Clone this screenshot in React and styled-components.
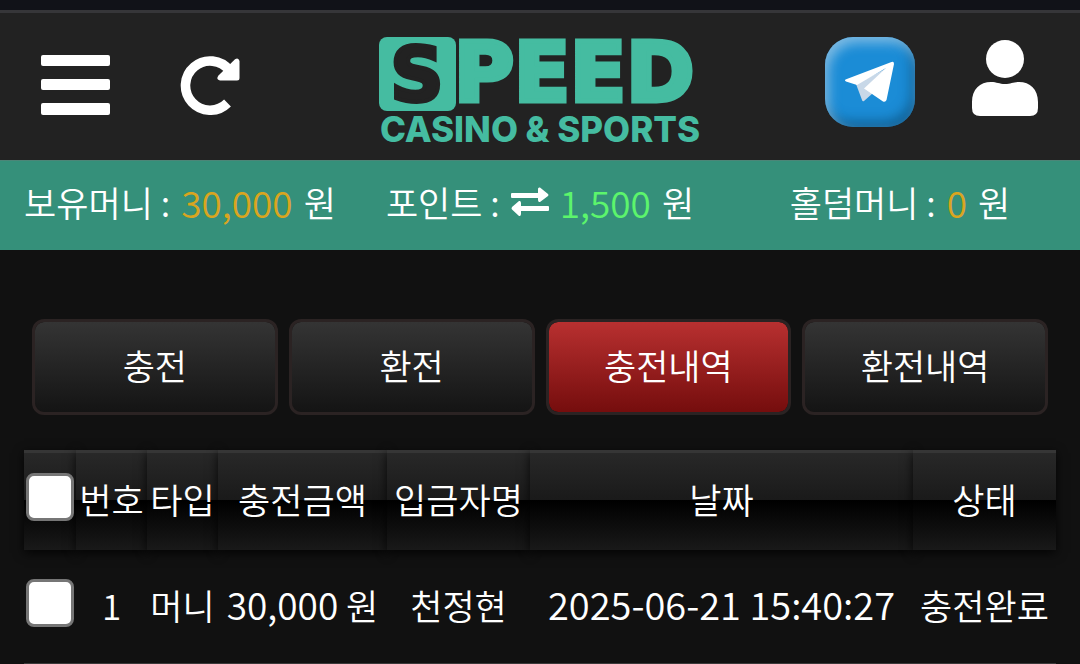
import { useState } from "react";
import styled, { createGlobalStyle } from "styled-components";

const GlobalStyle = createGlobalStyle`
  * {
    box-sizing: border-box;
  }

  body {
    margin: 0;
    background: #111;
    color: #fff;
    font-family: "Noto Sans CJK KR", sans-serif;
    font-size: 35px;
    font-weight: 350;
    line-height: 48px;
  }
`;

const Header = styled.header`
  display: grid;
  grid-template-columns: 1fr auto 1fr;
  align-items: center;
  height: 160px;
  padding: 0 41px 0 40px;
  background: linear-gradient(#111218 10px, #363639 10px, #363639 13px, #222 13px);
`;

const HeaderGroup = styled.div`
  display: flex;
  align-items: ${({ $end }) => ($end ? "flex-start" : "center")};
  justify-content: ${({ $end }) => ($end ? "flex-end" : "flex-start")};
  gap: ${({ $end }) => ($end ? "56px" : "70px")};
  padding-top: ${({ $end }) => ($end ? "4px" : "10px")};
`;

const IconButton = styled.button`
  display: flex;
  padding: 0;
  border: 0;
  background: none;
  color: #fff;
  cursor: pointer;
`;

const LogoLink = styled.a`
  display: flex;
  padding-top: 20px;
`;

const TelegramLink = styled.a`
  display: flex;
  align-items: center;
  justify-content: center;
  width: 90px;
  height: 90px;
  border-radius: 28px;
  background: #1b8cd6;
  box-shadow: inset 4px 6px 12px rgba(190, 220, 240, 0.6),
    inset -4px -6px 12px rgba(10, 70, 110, 0.6);
`;

const MoneyBar = styled.section`
  display: grid;
  grid-template-columns: repeat(3, 1fr);
  align-items: center;
  height: 90px;
  padding-bottom: 8px;
  border-top: 1px solid #4c8577;
  background: #35907a;
`;

const MoneyItem = styled.div`
  display: flex;
  align-items: center;
  justify-content: center;
  gap: 11px;
  white-space: nowrap;
`;

const Amount = styled.span`
  color: ${({ $color }) => $color};
  font-size: 37px;
`;

const Main = styled.main`
  padding: 69px 24px 0;
`;

const Tabs = styled.nav`
  display: grid;
  grid-template-columns: repeat(4, 1fr);
  gap: 11px;
  padding: 0 8px;
`;

const TabButton = styled.button`
  height: 96px;
  padding: 0 0 4px;
  border: 3px solid #2b2323;
  border-radius: 12px;
  background: ${({ $active }) =>
    $active
      ? "linear-gradient(#b83030, #750d0d) padding-box"
      : "linear-gradient(#343434, #141414) padding-box"};
  color: #fff;
  font: inherit;
  cursor: pointer;
`;

const HistoryTable = styled.table`
  width: 100%;
  margin-top: 35px;
  border-spacing: 0;
  table-layout: fixed;
  text-align: center;
  white-space: nowrap;
`;

const HeadCell = styled.th`
  width: ${({ $width }) => $width};
  height: 100px;
  padding: 0 0 6px;
  border-top: 3px solid #363636;
  background: linear-gradient(#282828, #1a1a1a 48%, #000 49%, #191919);
  box-shadow: 0 3px 10px rgba(0, 0, 0, 0.8);
  font-weight: inherit;
`;

const Cell = styled.td`
  height: 114px;
  padding: 0 0 4px;
  border-bottom: 1px solid #3a3a3a;
`;

const DateText = styled.time`
  font-size: 38px;
`;

const CheckBox = styled.input`
  appearance: none;
  position: relative;
  display: block;
  width: 48px;
  height: 48px;
  margin: 0 auto 4px 2px;
  border: 3px solid #767676;
  border-radius: 8px;
  background: #fff;

  &:checked {
    background: #b83030;
  }
`;

const MenuIcon = () => (
  <svg width="70" height="62" viewBox="0 0 70 62" fill="currentColor">
    <rect x="1" y="1" width="69" height="11" rx="2" />
    <rect x="1" y="25" width="69" height="11" rx="2" />
    <rect x="1" y="49" width="69" height="12" rx="2" />
  </svg>
);

const RefreshIcon = () => (
  <svg width="60" height="60" viewBox="-1 -1 60 60">
    <path
      d="M46.5 47A24.600 24.600 0 1 1 48.500 14.500"
      fill="none"
      stroke="currentColor"
      strokeWidth="9.6"
    />
    <path
      d="M54 3.200Q57.500 1 58.500 5V22Q58.500 24.500 56 24.500H39Q34.500 23.500 37.500 19.500Z"
      fill="currentColor"
    />
  </svg>
);

const UserIcon = () => (
  <svg width="68" height="80" viewBox="0 -2 68 80" fill="currentColor">
    <circle cx="34" cy="20" r="19" />
    <path d="M1 63C1 50 9 43 20 43C26 43 28 45 34 45C40 45 42 43 48 43C59 43 67 50 67 63V69Q67 77 59 77H9Q1 77 1 69Z" />
  </svg>
);

const PlaneIcon = () => (
  <svg width="52" height="44" viewBox="0 0 52 44">
    <path d="M12 24L18 40Q18.500 42 20 41L29 33L43 8Z" fill="#c8d8e8" />
    <path
      d="M1.500 19.500Q0 20.500 2 21.500L13 25L42 8L20 28.500L39 41.500Q41.500 42.500 42.500 40L50 4Q50 1 47.500 2Z"
      fill="#fff"
    />
  </svg>
);

const ExchangeIcon = () => (
  <svg width="38" height="30" viewBox="0 0 38 30" fill="currentColor">
    <path d="M1 6H27V2Q27 0 29 .5L37 7Q38 8 37 9L29 15Q27 15.500 27 13V11H1Q0 11 0 10V7Q0 6 1 6Z" />
    <path d="M37 19H10V16Q10 13.500 8 14L1 20Q0 21.500 1 22.500L8 29Q10 29.500 10 27V24H37Q38 24 38 23V20Q38 19 37 19Z" />
  </svg>
);

const Logo = () => (
  <svg width="324" height="108" viewBox="0 0 324 108" fill="#45bca1" role="img" overflow="visible">
    <title>SPEED CASINO &amp; SPORTS</title>
    <rect x="1" y="1" width="77" height="74" rx="8" />
    <g fontFamily="DejaVu Sans" fontWeight="700">
      <text x="39" y="65" fontSize="74" textAnchor="middle" fill="#222" stroke="#222" strokeWidth="4">
        S
      </text>
      <text x="76" y="65" fontSize="82" stroke="#45bca1" strokeWidth="5">
        PEED
      </text>
    </g>
    <text x="162" y="106" fontFamily="Inter" fontSize="35" fontWeight="800" textAnchor="middle">
      CASINO &amp; SPORTS
    </text>
  </svg>
);

const tabs = ["충전", "환전", "충전내역", "환전내역"];

const columns = [
  { label: "번호", width: "71px" },
  { label: "타입", width: "71px" },
  { label: "충전금액", width: "169px" },
  { label: "입금자명", width: "143px" },
  { label: "날짜", width: "auto" },
  { label: "상태", width: "143px" },
];

const rows = [
  {
    id: 1,
    type: "머니",
    amount: "30,000",
    name: "천정현",
    date: "2025-06-21 15:40:27",
    status: "충전완료",
  },
];

const App = () => {
  const [active, setActive] = useState("충전내역");

  return (
    <>
      <GlobalStyle />
      <Header>
        <HeaderGroup>
          <IconButton type="button" aria-label="메뉴">
            <MenuIcon />
          </IconButton>
          <IconButton type="button" aria-label="새로고침">
            <RefreshIcon />
          </IconButton>
        </HeaderGroup>
        <LogoLink href="#home">
          <Logo />
        </LogoLink>
        <HeaderGroup $end>
          <TelegramLink href="#telegram" aria-label="텔레그램">
            <PlaneIcon />
          </TelegramLink>
          <IconButton type="button" aria-label="내 정보">
            <UserIcon />
          </IconButton>
        </HeaderGroup>
      </Header>
      <MoneyBar>
        <MoneyItem>
          <span>보유머니 :</span>
          <Amount $color="#d9a520">30,000</Amount>
          <span>원</span>
        </MoneyItem>
        <MoneyItem>
          <span>포인트 :</span>
          <ExchangeIcon />
          <Amount $color="#5cf56c">1,500</Amount>
          <span>원</span>
        </MoneyItem>
        <MoneyItem>
          <span>홀덤머니 :</span>
          <Amount $color="#d9a520">0</Amount>
          <span>원</span>
        </MoneyItem>
      </MoneyBar>
      <Main>
        <Tabs>
          {tabs.map((tab) => (
            <TabButton
              key={tab}
              type="button"
              $active={tab === active}
              onClick={() => setActive(tab)}
            >
              {tab}
            </TabButton>
          ))}
        </Tabs>
        <HistoryTable>
          <thead>
            <tr>
              <HeadCell $width="52px">
                <CheckBox type="checkbox" aria-label="전체 선택" />
              </HeadCell>
              {columns.map(({ label, width }) => (
                <HeadCell key={label} $width={width}>
                  {label}
                </HeadCell>
              ))}
            </tr>
          </thead>
          <tbody>
            {rows.map((row) => (
              <tr key={row.id}>
                <Cell>
                  <CheckBox type="checkbox" aria-label={`${row.id}번 선택`} />
                </Cell>
                <Cell>{row.id}</Cell>
                <Cell>{row.type}</Cell>
                <Cell>
                  <Amount>{row.amount}</Amount> 원
                </Cell>
                <Cell>{row.name}</Cell>
                <Cell>
                  <DateText>{row.date}</DateText>
                </Cell>
                <Cell>{row.status}</Cell>
              </tr>
            ))}
          </tbody>
        </HistoryTable>
      </Main>
    </>
  );
};

export default App;
